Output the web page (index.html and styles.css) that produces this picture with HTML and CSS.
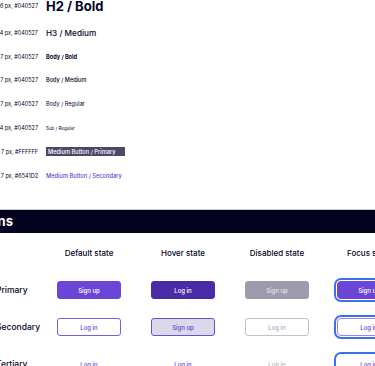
FILE: index.html
```html
<!DOCTYPE html>
<html lang="en">
<head>
  <meta charset="UTF-8">
  <title>Style guide</title>
  <link rel="stylesheet" href="styles.css">
</head>
<body>
  <!-- typography -->
  <div class="type-list">
    <div class="type-row first">
      <span class="spec">16 px, #040527</span>
      <span class="h2">H2 / Bold</span>
    </div>
    <div class="type-row">
      <span class="spec">14 px, #040527</span>
      <span class="h3">H3 / Medium</span>
    </div>
    <div class="type-row">
      <span class="spec">7 px, #040527</span>
      <span class="body-bold">Body / Bold</span>
    </div>
    <div class="type-row">
      <span class="spec">7 px, #040527</span>
      <span class="body-medium">Body / Medium</span>
    </div>
    <div class="type-row">
      <span class="spec">7 px, #040527</span>
      <span class="body-regular">Body / Regular</span>
    </div>
    <div class="type-row">
      <span class="spec">4 px, #040527</span>
      <span class="sub">Sub / Regular</span>
    </div>
    <div class="type-row">
      <span class="spec">7 px, #FFFFFF</span>
      <span class="btn-primary-text">Medium Button / Primary</span>
    </div>
    <div class="type-row">
      <span class="spec">7 px, #6541D2</span>
      <span class="btn-secondary-text">Medium Button / Secondary</span>
    </div>
  </div>

  <!-- buttons -->
  <div class="band">Buttons</div>

  <div class="states">
    <div></div>
    <div class="state-head">Default state</div>
    <div class="state-head">Hover state</div>
    <div class="state-head">Disabled state</div>
    <div class="state-head">Focus state</div>

    <div class="row-label">Primary</div>
    <div class="cell"><button class="btn primary">Sign up</button></div>
    <div class="cell"><button class="btn primary hover">Log in</button></div>
    <div class="cell"><button class="btn primary disabled">Sign up</button></div>
    <div class="cell"><button class="btn primary focus">Sign up</button></div>

    <div class="row-label">Secondary</div>
    <div class="cell"><button class="btn secondary">Log in</button></div>
    <div class="cell"><button class="btn secondary hover">Sign up</button></div>
    <div class="cell"><button class="btn secondary disabled">Log in</button></div>
    <div class="cell"><button class="btn secondary focus">Log in</button></div>

    <div class="row-label">Tertiary</div>
    <div class="cell"><button class="btn tertiary">Log in</button></div>
    <div class="cell"><button class="btn tertiary">Log in</button></div>
    <div class="cell"><button class="btn tertiary disabled">Log in</button></div>
    <div class="cell"><button class="btn tertiary focus">Log in</button></div>
  </div>
</body>
</html>
```

FILE: styles.css
```css
body {
  margin: 0;
  font-family: Inter, "Noto Sans", sans-serif;
  color: #040527;
  background: #fff;
  overflow: hidden;
  width: 375px;
  height: 366px;
}

/* typography */
.type-list {
  margin-left: -42px;
  margin-top: -10px;
}

.type-row {
  display: grid;
  grid-template-columns: 80px 1fr;
  column-gap: 8px;
  align-items: center;
  height: 23.8px;
}

.type-row.first {
  height: 31px;
}

.spec {
  font-size: 5.5px;
  text-align: right;
  white-space: nowrap;
}

.h2 {
  font-size: 13px;
  font-weight: 700;
}

.h3 {
  font-size: 8.2px;
  font-weight: 500;
}

.body-bold {
  font-size: 5.6px;
  font-weight: 700;
}

.body-medium {
  font-size: 5.6px;
  font-weight: 500;
}

.body-regular {
  font-size: 5.6px;
  font-weight: 400;
}

.sub {
  font-size: 4.5px;
}

.btn-primary-text {
  justify-self: start;
  font-size: 5.7px;
  font-weight: 500;
  color: #fff;
  background: #4b4868;
  padding: 1px 2px;
  width: 75px;
}

.btn-secondary-text {
  font-size: 5.7px;
  font-weight: 500;
  color: #6541d2;
}

/* buttons */
.band {
  margin-top: 21px;
  height: 23px;
  background: #03021f;
  border-top: 1px solid #cfcfd8;
  color: #fff;
  font-size: 13px;
  font-weight: 700;
  line-height: 23px;
  text-indent: -36px;
  overflow: hidden;
}

.states {
  display: grid;
  grid-template-columns: 43px 92px 96px 92px 92px;
  grid-auto-rows: 37px;
  margin-top: 2px;
  align-items: center;
}

.state-head {
  text-align: center;
  font-size: 8px;
  font-weight: 500;
}

.row-label {
  font-size: 8.5px;
  font-weight: 500;
  margin-left: -4px;
  white-space: nowrap;
}

.cell {
  display: flex;
  justify-content: center;
}

.btn {
  width: 64px;
  height: 18px;
  border-radius: 3px;
  font-family: Inter, "Noto Sans", sans-serif;
  font-size: 6px;
  font-weight: 500;
  border: 1px solid transparent;
  padding: 0;
  cursor: pointer;
}

.btn.primary {
  background: #6a45d6;
  color: #fff;
  border-color: #6a45d6;
}

.btn.primary.hover {
  background: #4a2ba6;
  border-color: #4a2ba6;
}

.btn.primary.disabled {
  background: #9d9aad;
  border-color: #9d9aad;
  color: #e6e5ec;
}

.btn.secondary {
  background: #fff;
  color: #6541d2;
  border-color: #7b5ce0;
}

.btn.secondary.hover {
  background: #dcd8ec;
  border-color: #6a4fd0;
}

.btn.secondary.disabled {
  border-color: #c3c0ce;
  color: #aaa7b6;
}

.btn.tertiary {
  background: #fff;
  color: #6541d2;
}

.btn.tertiary.disabled {
  color: #b4b1c0;
}

.btn.focus {
  border-radius: 4px;
  box-shadow: 0 0 0 1px #fff, 0 0 0 3px #3a70f0;
}

.btn.secondary.focus {
  border-color: #9b82ea;
}

.btn.tertiary.focus {
  border-color: #fff;
}
```
